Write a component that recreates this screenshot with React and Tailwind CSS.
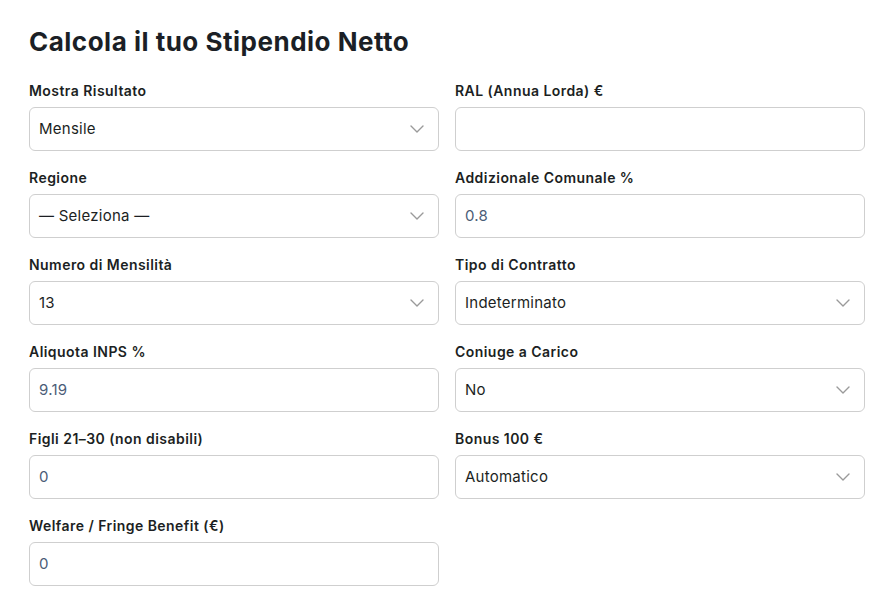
import React from 'react';

const Chevron = () => (
  <svg className="pointer-events-none absolute right-[14px] top-1/2 -translate-y-1/2" width="14" height="8" viewBox="0 0 14 8" fill="none">
    <path d="M1 1l6 6 6-6" stroke="#9a9a9a" strokeWidth="1.4" strokeLinecap="round" strokeLinejoin="round" />
  </svg>
);

const Field = ({ label, children }) => (
  <div className="flex flex-col">
    <label className="mb-[6px] text-[14px] font-semibold leading-[21px] tracking-[0.45px] text-[#1c1f23]">{label}</label>
    {children}
  </div>
);

const SelectBox = ({ value }) => (
  <div className="relative flex h-[44px] items-center rounded-[6px] border border-[#cfcfcf] bg-white px-[9px] text-[15px] tracking-[0.25px] text-[#1c1f23]">
    {value}
    <Chevron />
  </div>
);

const InputBox = ({ value }) => (
  <div className="flex h-[44px] items-center rounded-[6px] border border-[#cfcfcf] bg-white px-[9px] text-[15px] tracking-[0.25px] text-[#4b5c77]">
    {value}
  </div>
);

export default function App() {
  return (
    <div className="min-h-screen bg-white pl-[29px] pt-[24px] font-['Inter','Liberation_Sans',sans-serif]">
      <h1 className="mb-[20px] text-[26px] font-bold leading-[36px] tracking-[0.5px] text-[#1b1f26]">
        Calcola il tuo Stipendio Netto
      </h1>
      <div className="grid w-[836px] grid-cols-2 gap-x-[16px] gap-y-[16px]">
        <Field label="Mostra Risultato"><SelectBox value="Mensile" /></Field>
        <Field label="RAL (Annua Lorda) €"><InputBox value="" /></Field>
        <Field label="Regione"><SelectBox value="— Seleziona —" /></Field>
        <Field label="Addizionale Comunale %"><InputBox value="0.8" /></Field>
        <Field label="Numero di Mensilità"><SelectBox value="13" /></Field>
        <Field label="Tipo di Contratto"><SelectBox value="Indeterminato" /></Field>
        <Field label="Aliquota INPS %"><InputBox value="9.19" /></Field>
        <Field label="Coniuge a Carico"><SelectBox value="No" /></Field>
        <Field label="Figli 21–30 (non disabili)"><InputBox value="0" /></Field>
        <Field label="Bonus 100 €"><SelectBox value="Automatico" /></Field>
        <Field label="Welfare / Fringe Benefit (€)"><InputBox value="0" /></Field>
      </div>
    </div>
  );
}
